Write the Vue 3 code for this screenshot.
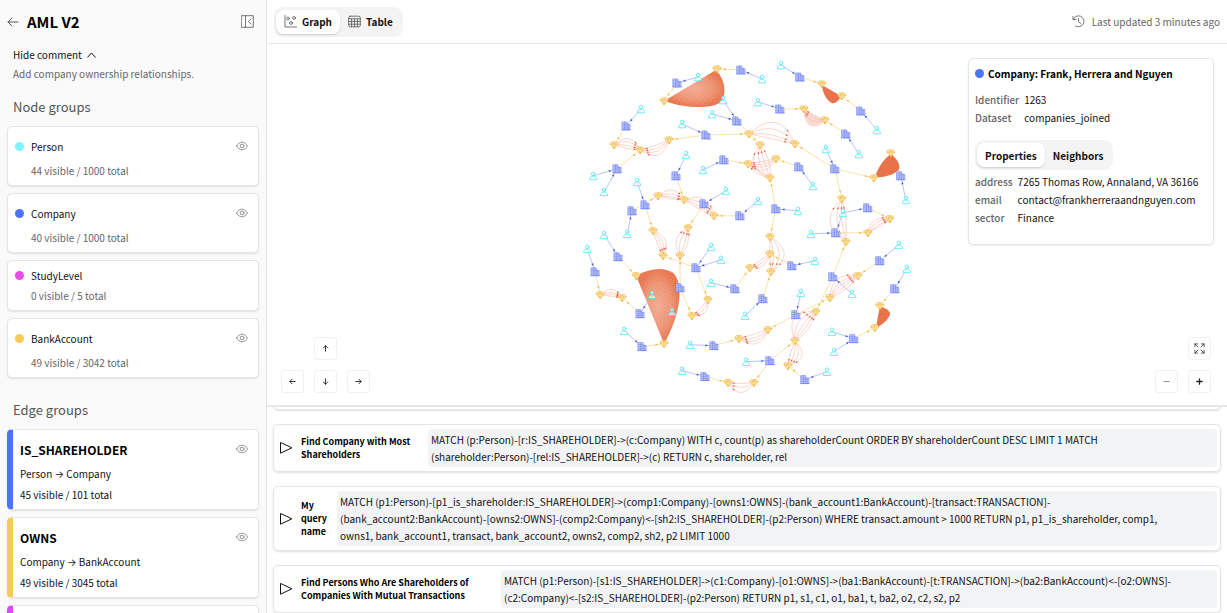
<script setup>
import { ref } from 'vue'

const view = ref('graph')
const panelTab = ref('properties')

const nodeGroups = [
  { name: 'Person', tone: 'cyan', count: '44 visible / 1000 total', eye: true },
  { name: 'Company', tone: 'blue', count: '40 visible / 1000 total', eye: true },
  { name: 'StudyLevel', tone: 'pink', count: '0 visible / 5 total', eye: false },
  { name: 'BankAccount', tone: 'amber', count: '49 visible / 3042 total', eye: true },
]

const edgeGroups = [
  { name: 'IS_SHAREHOLDER', tone: 'blue', from: 'Person', to: 'Company', count: '45 visible / 101 total' },
  { name: 'OWNS', tone: 'amber', from: 'Company', to: 'BankAccount', count: '49 visible / 3045 total' },
]

const queries = [
  {
    title: 'Find Company with Most Shareholders',
    width: 117,
    text: `MATCH (p:Person)-[r:IS_SHAREHOLDER]->(c:Company) WITH c, count(p) as shareholderCount ORDER BY shareholderCount DESC LIMIT 1 MATCH
(shareholder:Person)-[rel:IS_SHAREHOLDER]->(c) RETURN c, shareholder, rel`,
  },
  {
    title: 'My query name',
    width: 26,
    text: `MATCH (p1:Person)-[p1_is_shareholder:IS_SHAREHOLDER]->(comp1:Company)-[owns1:OWNS]-(bank_account1:BankAccount)-[transact:TRANSACTION]-
(bank_account2:BankAccount)-[owns2:OWNS]-(comp2:Company)<-[sh2:IS_SHAREHOLDER]-(p2:Person) WHERE transact.amount > 1000 RETURN p1, p1_is_shareholder, comp1,
owns1, bank_account1, transact, bank_account2, owns2, comp2, sh2, p2 LIMIT 1000`,
  },
  {
    title: 'Find Persons Who Are Shareholders of Companies With Mutual Transactions',
    width: 190,
    text: `MATCH (p1:Person)-[s1:IS_SHAREHOLDER]->(c1:Company)-[o1:OWNS]->(ba1:BankAccount)-[t:TRANSACTION]->(ba2:BankAccount)<-[o2:OWNS]-
(c2:Company)<-[s2:IS_SHAREHOLDER]-(p2:Person) RETURN p1, s1, c1, o1, ba1, t, ba2, o2, c2, s2, p2`,
  },
]

// Person -> Company
const shares = [
  [698,77,677,83],[762,79,741,70],[723,100,737,121],[712,114,737,121],[682,124,706,135],[641,109,626,126],
  [686,155,676,176],[703,170,724,160],[726,191,704,204],[637,182,645,205],[593,176,617,169],[604,192,617,169],
  [627,234,632,211],[604,235,618,257],[587,249,595,272],[781,65,800,77],[758,102,780,109],[877,130,861,111],
  [859,154,846,134],[826,149,835,169],[813,186,799,167],[758,201,740,216],[798,211,776,209],[843,213,868,208],
  [843,213,836,233],[811,234,836,233],[906,200,901,176],[711,247,696,268],[721,260,696,268],[711,283,735,289],
  [745,316,763,299],[624,331,642,347],[690,345,714,346],[682,371,705,377],[652,295,640,314],[672,312,680,288],
  [899,245,880,261],[815,261,792,266],[907,269,895,289],[801,293,796,315],[852,294,833,277],[832,332,854,339],
  [834,352,854,339],[746,362,770,361],[827,372,805,380],
]

// Company -> BankAccount
const owns = [
  [741,70,717,69],[677,83,664,101],[626,126,614,145],[706,135,669,140],[706,135,749,134],[737,121,760,145],
  [724,160,748,164],[676,176,684,200],[617,169,640,150],[632,211,658,196],[645,205,653,231],[704,204,688,228],
  [740,216,714,216],[800,77,822,84],[861,111,842,96],[780,109,804,109],[846,134,825,120],[835,169,795,144],
  [835,169,874,178],[835,169,842,199],[799,167,776,159],[776,209,770,178],[776,209,770,237],[868,208,890,219],
  [836,233,868,233],[901,176,891,153],[696,268,663,256],[696,268,708,300],[735,289,750,268],[680,288,680,256],
  [680,288,692,316],[618,257,636,276],[595,272,600,295],[640,314,622,298],[642,347,664,344],[714,346,739,339],
  [705,377,728,383],[880,261,858,276],[792,266,770,254],[833,277,846,242],[833,277,816,312],[895,289,880,306],
  [763,299,771,272],[796,315,830,298],[796,315,768,330],[854,339,875,328],[770,361,795,341],[770,361,754,383],
  [805,380,788,366],
]

// BankAccount -> BankAccount, with the bow of each parallel arc
const transfers = [
  [614,145,640,150,[-9,-6,-2,1]],[669,140,640,150,[-1,-4,-7,-11]],[658,196,684,200,[-8,-4,-1,1]],
  [684,200,714,216,[-10,-6,-2,1]],[653,231,663,256,[-8,-5,-2,1]],[680,256,688,228,[-8,-4,1,4]],
  [600,295,622,298,[-7,-4,-2,0]],[708,300,692,316,[-1,-4,-7]],[749,134,795,144,[-17,-10,-4,0]],
  [770,178,760,145,[-12,-6,-1,4]],[776,159,748,164,[0,-3,-6,-9]],[770,178,748,164,[0,-3]],
  [846,242,842,199,[-14,-7,-2,2]],[868,233,890,219,[-7,-4,-1,1]],
  [770,237,771,272,[-14,-9,-3,1]],[770,254,750,268,[0,-3,-6]],[830,298,858,276,[-10,-6,-3,0,3]],
  [795,341,816,312,[-14,-8,-3,1,4]],[795,341,788,366,[-11,-7,-3,1]],[768,330,739,339,[0,-4,-7,-10]],
  [754,383,728,383,[-1,-5,-10]],[825,120,804,109,[-1,-4,-7]],
]

const unique = (list) => [...new Map(list.map((p) => [p.join(), p])).values()]
const persons = unique(shares.map((e) => [e[0], e[1]]))
const companies = unique(shares.map((e) => [e[2], e[3]]))
const accounts = unique([
  ...owns.map((e) => [e[2], e[3]]),
  ...transfers.flatMap((e) => [[e[0], e[1]], [e[2], e[3]]]),
])

const round = (n) => Math.round(n * 100) / 100

function head(tx, ty, ux, uy, back, size) {
  const x = tx - ux * back
  const y = ty - uy * back
  const bx = x - ux * size
  const by = y - uy * size
  const w = size * 0.42
  return `M${round(x)} ${round(y)}L${round(bx - uy * w)} ${round(by + ux * w)}L${round(bx + uy * w)} ${round(by - ux * w)}Z`
}

function straight(list) {
  return list.map(([x1, y1, x2, y2]) => {
    const len = Math.hypot(x2 - x1, y2 - y1)
    return {
      line: `M${x1} ${y1}L${x2} ${y2}`,
      head: head(x2, y2, (x2 - x1) / len, (y2 - y1) / len, 6, 2.6),
    }
  })
}

function bowed(list) {
  return list.flatMap(([x1, y1, x2, y2, bows]) => {
    const len = Math.hypot(x2 - x1, y2 - y1)
    const nx = -(y2 - y1) / len
    const ny = (x2 - x1) / len
    return bows.map((b) => {
      const cx = (x1 + x2) / 2 + nx * b * 2
      const cy = (y1 + y2) / 2 + ny * b * 2
      const t = 0.8
      const px = (1 - t) ** 2 * x1 + 2 * t * (1 - t) * cx + t * t * x2
      const py = (1 - t) ** 2 * y1 + 2 * t * (1 - t) * cy + t * t * y2
      const dx = (1 - t) * (cx - x1) + t * (x2 - cx)
      const dy = (1 - t) * (cy - y1) + t * (y2 - cy)
      const dl = Math.hypot(dx, dy)
      return {
        line: `M${x1} ${y1}Q${round(cx)} ${round(cy)} ${x2} ${y2}`,
        head: head(px, py, dx / dl, dy / dl, -1, 2.3),
      }
    })
  })
}

const shareLines = straight(shares)
const ownLines = straight(owns)
const transferLines = bowed(transfers)

const blobs = [
  'M664 101L716 70C725 79 727 94 721 102C710 110 684 108 664 101Z',
  'M636 276C650 268 664 267 673 273C684 284 681 314 664 344Z',
]
const smallBlobs = [
  'M822 85L841 96C839 101 835 104 832 103C827 101 823 94 822 85Z',
  'M891 154C898 159 902 167 898 171C891 177 883 177 875 178C878 168 883 160 891 154Z',
  'M880 307C887 308 891 312 890 315C888 321 881 326 876 328Z',
]
</script>

<template>
  <div class="app">
    <svg class="defs" aria-hidden="true">
      <symbol id="eye" viewBox="0 0 12 10">
        <path d="M.5 5C2 2.400 4 1.200 6 1.200S10 2.400 11.500 5C10 7.600 8 8.800 6 8.800S2 7.600 .5 5Z" />
        <circle cx="6" cy="5" r="1.900" />
      </symbol>
      <symbol id="left" viewBox="0 0 12 12"><path d="M11 6H1M5 2L1 6L5 10" /></symbol>
      <symbol id="arrow" viewBox="0 0 10 10"><path d="M2 5H8M5.500 2.500L8 5L5.500 7.500" /></symbol>
      <symbol id="play" viewBox="0 0 14 14"><path d="M1.500 1.800V12.200L12.500 7Z" /></symbol>
      <symbol id="person" viewBox="-5 -5 10 10">
        <circle cy="-2" r="1.700" /><path d="M-3.500 3.500C-3.500 .8 -2 .2 0 .2S3.500 .8 3.500 3.500Z" />
      </symbol>
      <symbol id="company" viewBox="-5 -5 10 10">
        <path class="fill" d="M-4 -4H1V4H-4ZM1 -1.500H4V4H1Z" />
        <path d="M-4 -4H1V4H-4ZM1 -1.500H4V4H1M-1.500 -4V4M-4 -2H1M-4 0H1M-4 2H1M2.500 -1V4M-4.500 4H4.500" />
      </symbol>
      <symbol id="account" viewBox="-5 -5 10 10">
        <path class="fill" d="M-2.500 -3H2.500L4 -.8L0 4L-4 -.8Z" />
        <path d="M-2.500 -3H2.500L4 -.8L0 4L-4 -.8ZM-4 -.8H4M-1.500 -.8L0 4L1.500 -.8L0 -3L-1.500 -.8" />
      </symbol>
    </svg>

    <aside class="sidebar">
      <header class="brand">
        <button class="plain" aria-label="Back"><svg class="i12"><use href="#left" /></svg></button>
        <h1>AML V2</h1>
        <button class="plain" aria-label="Collapse sidebar">
          <svg class="i13 thin" viewBox="0 0 13 13"><path d="M.7 .7H12.300V12.300H.7ZM4.500 .7V12.300M10 4L7.300 6.500L10 9" /></svg>
        </button>
      </header>
      <div class="comment">
        <button class="plain toggle">Hide comment
          <svg class="chev" viewBox="0 0 9 6"><path d="M.6 5.200L4.500 1L8.400 5.200" /></svg>
        </button>
        <p>Add company ownership relationships.</p>
      </div>

      <h2>Node groups</h2>
      <div class="cards">
        <article v-for="g in nodeGroups" :key="g.name" class="card node">
          <div class="row" :class="{ tall: g.eye }">
            <span class="dot" :class="g.tone"></span>
            <span class="name">{{ g.name }}</span>
            <button v-if="g.eye" class="plain eye" :aria-label="'Toggle ' + g.name"><svg><use href="#eye" /></svg></button>
          </div>
          <p class="muted">{{ g.count }}</p>
        </article>
      </div>

      <h2 class="second">Edge groups</h2>
      <div class="cards">
        <article v-for="g in edgeGroups" :key="g.name" class="card edge" :class="g.tone">
          <div class="row tall">
            <h3>{{ g.name }}</h3>
            <button class="plain eye" :aria-label="'Toggle ' + g.name"><svg><use href="#eye" /></svg></button>
          </div>
          <p>{{ g.from }} <span class="to">→</span> {{ g.to }}</p>
          <p>{{ g.count }}</p>
        </article>
        <article class="card edge violet"><div class="row tall"></div></article>
      </div>
    </aside>

    <main>
      <header class="topbar">
        <div class="segment">
          <button :class="{ on: view === 'graph' }" @click="view = 'graph'">
            <svg class="i13 thin" viewBox="0 0 13 13"><path d="M1 .5V12H12.500" /><circle cx="4" cy="3.500" r="1.400" /><circle cx="10" cy="3" r="1.400" /><circle cx="7" cy="8" r="1.400" /></svg>
            Graph
          </button>
          <button :class="{ on: view === 'table' }" @click="view = 'table'">
            <svg class="i13 thin" viewBox="0 0 13 13"><rect x=".7" y="1.200" width="11.600" height="10.600" rx="1.500" /><path d="M.7 3.800H12.300M.7 6.500H12.300M.7 9.200H12.300M3.600 3.800V11.800M6.500 3.800V11.800M9.400 3.800V11.800" /></svg>
            Table
          </button>
        </div>
        <div class="updated">
          <svg class="i13 thin" viewBox="0 0 13 13"><path d="M1 1.500V4.500H4M1.200 4.500A5.500 5.500 0 1 1 3.500 11M6.500 3.500V6.800L8.800 8.500" /></svg>
          Last updated 3 minutes ago
        </div>
      </header>

      <section class="stage">
        <svg class="graph" viewBox="267 44 960 361" role="img" aria-label="Ownership graph">
          <defs>
            <radialGradient id="glow">
              <stop offset="0" stop-color="#f2a98f" /><stop offset=".6" stop-color="#ee9272" /><stop offset="1" stop-color="#e8734a" />
            </radialGradient>
            <pattern id="grain" width="3" height="3" patternUnits="userSpaceOnUse" patternTransform="rotate(24)">
              <path class="speck" d="M0 0H1V1H0ZM1.500 1.500H2.300V2.300H1.500Z" />
            </pattern>
          </defs>
          <g class="l-own"><template v-for="(e, i) in ownLines" :key="i"><path class="line" :d="e.line" /><path class="tip" :d="e.head" /></template></g>
          <g class="l-share"><template v-for="(e, i) in shareLines" :key="i"><path class="line" :d="e.line" /><path class="tip" :d="e.head" /></template></g>
          <path class="haze" d="M825 121C819 128 811 128 808 124C805 120 803 114 804 110C810 113 818 117 825 121Z" />
          <g class="l-tx"><template v-for="(e, i) in transferLines" :key="i"><path class="line" :d="e.line" /><path class="tip" :d="e.head" /></template></g>
          <path v-for="b in smallBlobs" :key="b" class="blob" :d="b" />
          <g v-for="b in blobs" :key="b">
            <path class="blob glow" :d="b" /><path class="blob grain" :d="b" />
          </g>
          <g class="companies"><use v-for="(n, i) in companies" :key="i" href="#company" :x="n[0] - 5" :y="n[1] - 5" width="10" height="10" /></g>
          <g class="accounts">
            <use v-for="(n, i) in accounts" :key="i" href="#account" :x="n[0] - 5" :y="n[1] - 5" width="10" height="10" />
          </g>
          <g class="persons"><use v-for="(n, i) in persons" :key="i" href="#person" :x="n[0] - 5" :y="n[1] - 5" width="10" height="10" /></g>
        </svg>

        <div class="pad">
          <button class="up" aria-label="Pan up"><svg><use href="#arrow" /></svg></button>
          <button class="west" aria-label="Pan left"><svg><use href="#arrow" /></svg></button>
          <button class="down" aria-label="Pan down"><svg><use href="#arrow" /></svg></button>
          <button aria-label="Pan right"><svg><use href="#arrow" /></svg></button>
        </div>
        <div class="pad zoom">
          <button class="fit" aria-label="Fit graph"><svg class="full" viewBox="0 0 12 12"><path d="M1 4V1H4M1 1L4.500 4.500M8 1H11V4M11 1L7.500 4.500M1 8V11H4M1 11L4.500 7.500M8 11H11V8M11 11L7.500 7.500" /></svg></button>
          <button class="out" aria-label="Zoom out"><svg viewBox="0 0 10 10"><path d="M2 5H8" /></svg></button>
          <button class="in" aria-label="Zoom in"><svg viewBox="0 0 10 10"><path d="M2 5H8M5 2V8" /></svg></button>
        </div>

        <aside class="details">
          <h4><span class="dot blue"></span>Company: Frank, Herrera and Nguyen</h4>
          <dl class="meta">
            <dt>Identifier</dt><dd>1263</dd>
            <dt>Dataset</dt><dd>companies_joined</dd>
          </dl>
          <div class="segment">
            <button :class="{ on: panelTab === 'properties' }" @click="panelTab = 'properties'">Properties</button>
            <button :class="{ on: panelTab === 'neighbors' }" @click="panelTab = 'neighbors'">Neighbors</button>
          </div>
          <dl>
            <dt>address</dt><dd>7265 Thomas Row, Annaland, VA 36166</dd>
            <dt>email</dt><dd>contact@frankherreraandnguyen.com</dd>
            <dt>sector</dt><dd>Finance</dd>
          </dl>
        </aside>
      </section>

      <section class="queries">
        <article class="query blank"></article>
        <article v-for="q in queries" :key="q.title" class="query">
          <button class="plain" :aria-label="'Run ' + q.title"><svg class="play"><use href="#play" /></svg></button>
          <h5 :style="{ width: q.width + 'px' }">{{ q.title }}</h5>
          <code>{{ q.text }}</code>
        </article>
      </section>
    </main>
  </div>
</template>

<style>
body { margin: 0; }
</style>

<style scoped>
.app {
  display: flex;
  height: 100vh;
  overflow: hidden;
  background: #fff;
  color: #111;
  font: 10px/17px "Noto Sans CJK SC", "Noto Sans", sans-serif;
}
.app * { box-sizing: border-box; }
h1, h2, h3, h4, h5, p, dl, dd { margin: 0; }
button { font: inherit; color: inherit; cursor: pointer; }
svg { display: block; fill: none; stroke: currentColor; stroke-width: 1; stroke-linecap: round; stroke-linejoin: round; }
.defs { position: absolute; width: 0; height: 0; }
.plain { display: flex; align-items: center; border: 0; padding: 0; background: none; }
.i12 { width: 12px; height: 12px; color: #555; }
.i13 { width: 13px; height: 13px; flex: none; }
.thin { stroke-width: .8; color: #555; }

.sidebar {
  flex: none;
  width: 267px;
  padding: 0 7px;
  overflow: hidden;
  background: #fafafa;
  border-right: 1px solid #e6e6e6;
}
.brand { display: flex; align-items: center; gap: 8px; height: 43px; padding-right: 5px; }
.brand h1 { flex: 1; font-size: 15px; line-height: 22px; color: #000; }
.comment { padding: 2px 6px 0; color: #666; }
.toggle { gap: 5px; height: 19px; color: #111; }
.chev { width: 9px; height: 6px; }
.comment p { line-height: 19px; }
h2 { padding: 14px 6px 9px; font-size: 13px; line-height: 20px; font-weight: 400; color: #555; }
h2.second { padding-top: 22px; }
.cards { display: flex; flex-direction: column; gap: 7px; }
.card {
  display: flex;
  flex-direction: column;
  gap: 3px;
  padding: 6px 10px 6px 7px;
  background: #fff;
  border: 1px solid #e6e6e6;
  border-radius: 5px;
  box-shadow: 0 1px 2px rgba(0, 0, 0, .1);
}
.row { display: flex; align-items: center; min-height: 17px; gap: 7px; }
.row.tall { min-height: 26px; }
.dot { flex: none; width: 9px; height: 9px; border-radius: 50%; }
.dot.cyan { background: #7df3fb; }
.dot.blue { background: #4a74f5; }
.dot.pink { background: #e84de8; }
.dot.amber { background: #f5cb55; }
.eye { margin-left: auto; color: #777; }
.eye svg { width: 12px; height: 10px; stroke-width: .8; }
.muted { padding-left: 16px; color: #666; }
.edge { border-left: 6px solid; }
.edge.blue { border-left-color: #4a74f5; }
.edge.amber { border-left-color: #f5cb55; }
.edge.violet { border-left-color: #d84df0; }
h3 { font-size: 12px; line-height: 17px; color: #000; }
.to { font-family: Inter, sans-serif; }

main { display: flex; flex: 1; flex-direction: column; min-width: 0; }
.topbar {
  display: flex;
  align-items: center;
  justify-content: space-between;
  height: 44px;
  padding: 0 7px;
  border-bottom: 1px solid #e6e6e6;
}
.segment { display: inline-flex; padding: 3px 2px; border-radius: 9px; background: #f4f4f4; }
.segment button {
  display: flex;
  align-items: center;
  gap: 5px;
  height: 24px;
  padding: 0 8px;
  border: 0;
  border-radius: 7px;
  background: none;
  font-weight: 700;
}
.segment .on { background: #fff; box-shadow: 0 1px 2px rgba(0, 0, 0, .16); }
.updated { display: flex; align-items: center; gap: 7px; color: #666; }

.stage { position: relative; flex: 1; min-height: 0; }
.graph { width: 100%; height: 100%; }
.line { stroke-width: .5; }
.tip { stroke: none; }
.blob { fill: #e8734a; stroke: none; }
.blob.glow { fill: url(#glow); }
.blob.grain { fill: url(#grain); }
.speck { fill: #fff; fill-opacity: .25; stroke: none; }
.haze { fill: #fbdcd4; stroke: none; }
.l-own { color: #f3c65a; fill: #efb73c; }
.l-share { color: #7488f5; fill: #3450e0; }
.l-tx { color: #f4ab98; fill: #e5593b; }
.l-own .line, .l-share .line, .l-tx .line { fill: none; }
.companies { color: #6478ee; fill: #c3ccfb; stroke-width: .5; }
.accounts { color: #eeae28; fill: #fff3d2; stroke-width: .6; }
.persons { color: #4fe6f2; fill: #fff; fill-opacity: .6; stroke-width: .8; }
.fill { stroke: none; }

.pad {
  position: absolute;
  left: 14px;
  bottom: 12px;
  display: grid;
  grid-template-columns: repeat(3, 23px);
  gap: 10px;
}
.pad button {
  display: grid;
  place-items: center;
  width: 23px;
  height: 23px;
  padding: 0;
  border: 1px solid #f1f1f1;
  border-radius: 3px;
  background: #fff;
  color: #222;
}
.pad svg { width: 9px; height: 9px; }
.pad svg.full { width: 11px; height: 11px; stroke-width: .8; }
.up { grid-column: 2; }
.west { grid-column: 1; }
.up svg { transform: rotate(-90deg); }
.down svg { transform: rotate(90deg); }
.west svg { transform: rotate(180deg); }
.zoom { left: auto; right: 16px; grid-template-columns: repeat(2, 23px); }
.fit { grid-column: 2; }
.pad .out { color: #888; }
.in svg { stroke-width: 1.4; }

.details {
  position: absolute;
  top: 14px;
  right: 13px;
  width: 246px;
  padding: 6px 6px 17px;
  border: 1px solid #e6e6e6;
  border-radius: 5px;
  background: #fff;
  box-shadow: 0 1px 2px rgba(0, 0, 0, .08);
}
.details h4 { display: flex; align-items: center; gap: 4px; font-size: 10px; line-height: 17px; color: #000; }
.details dl { display: grid; grid-template-columns: auto 1fr; column-gap: 5px; line-height: 18px; white-space: nowrap; }
.details .meta { margin: 9px 0 13px; }
.details dt { color: #666; font-weight: 500; }
.details .segment { margin-bottom: 3px; }

.queries {
  display: flex;
  flex: none;
  flex-direction: column;
  justify-content: flex-end;
  gap: 14px;
  height: 34vh;
  padding: 0 6px;
  overflow: hidden;
  border-top: 2px solid #e8e8e8;
}
.query {
  display: flex;
  flex: none;
  align-items: center;
  padding: 4px 3px 4px 5px;
  border: 1px solid #e4e4e4;
  border-radius: 5px;
  box-shadow: 0 1px 2px rgba(0, 0, 0, .12);
}
.blank { height: 48px; }
.play { width: 14px; height: 14px; }
h5 { flex: none; margin: 0 10px 0 8px; font-size: 9px; line-height: 13px; color: #000; }
code {
  flex: 1;
  padding: 2px 3px;
  border-radius: 4px;
  background: #f2f3f5;
  font: inherit;
  white-space: pre-line;
  overflow-wrap: break-word;
}
</style>
